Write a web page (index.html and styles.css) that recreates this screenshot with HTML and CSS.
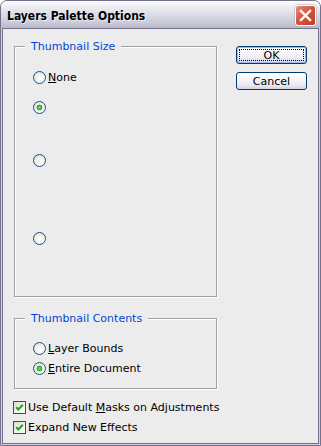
FILE: index.html
```html
<!DOCTYPE html>
<html>
<head>
<meta charset="utf-8">
<link rel="stylesheet" href="styles.css">
</head>
<body>
<div class="window">
  <div class="titlebar">
    <span class="title">Layers Palette Options</span>
    <span class="close">
      <svg width="21" height="21" viewBox="0 0 21 21"><path d="M6 6 L15 15 M15 6 L6 15" stroke="#fff" stroke-width="2.4" stroke-linecap="square" fill="none"/></svg>
    </span>
  </div>
  <div class="client">
    <div class="left">
      <div class="group g1">
        <div class="legend">Thumbnail Size</div>
        <div class="opt o1"><span class="radio"></span><span class="lbl"><u>N</u>one</span></div>
        <div class="opt o2"><span class="radio on"></span></div>
        <div class="opt o3"><span class="radio"></span></div>
        <div class="opt o4"><span class="radio"></span></div>
      </div>
      <div class="group g2">
        <div class="legend">Thumbnail Contents</div>
        <div class="opt p1"><span class="radio"></span><span class="lbl"><u>L</u>ayer Bounds</span></div>
        <div class="opt p2"><span class="radio on"></span><span class="lbl"><u>E</u>ntire Document</span></div>
      </div>
      <div class="checks">
        <div class="chk c1"><span class="box"><svg width="11" height="11" viewBox="0 0 11 11"><path d="M2.2 5.2 L4.3 7.5 L8.8 2.8" stroke="#21a121" stroke-width="2" fill="none"/></svg></span><span class="lbl">Use Default <u>M</u>asks on Adjustments</span></div>
        <div class="chk c2"><span class="box"><svg width="11" height="11" viewBox="0 0 11 11"><path d="M2.2 5.2 L4.3 7.5 L8.8 2.8" stroke="#21a121" stroke-width="2" fill="none"/></svg></span><span class="lbl">Expand New Effects</span></div>
      </div>
    </div>
    <div class="buttons">
      <div class="btn default"><span class="focus">OK</span></div>
      <div class="btn">Cancel</div>
    </div>
  </div>
</div>
</body>
</html>
```
FILE: styles.css
```css
html, body {
  margin: 0;
  background: #ffffff;
}
body {
  font-family: "DejaVu Sans", "Liberation Sans", sans-serif;
  font-size: 11px;
  line-height: 13px;
  color: #000;
}
.window {
  width: 321px;
  height: 446px;
  box-sizing: border-box;
  border: 1px solid #72728e;
  border-radius: 7px 7px 0 0;
  background: #d2d2de;
  display: flex;
  flex-direction: column;
  overflow: hidden;
}
.titlebar {
  height: 27px;
  flex: none;
  display: flex;
  justify-content: space-between;
  align-items: flex-start;
  padding: 0 4px 0 6px;
  background: linear-gradient(#fdfdfe 0%, #eeeef3 20%, #dcdce6 50%, #cacad8 80%, #b8b8cc 100%);
}
.title {
  font-family: "DejaVu Sans Condensed", "DejaVu Sans", sans-serif;
  font-stretch: condensed;
  font-weight: bold;
  font-size: 12px;
  line-height: 14px;
  margin-top: 8px;
  color: #000;
  text-shadow: 1px 1px 0 rgba(255,255,255,0.6);
}
.close {
  width: 21px;
  height: 21px;
  margin-top: 4px;
  box-sizing: border-box;
  border: 1px solid #fff;
  border-radius: 3px;
  background: linear-gradient(135deg, #e8907c 0%, #d4563e 45%, #c03a26 100%);
  display: flex;
  box-shadow: 0 0 0 0.5px #a8a8bc;
}
.close svg { margin: -1px; }
.client {
  flex: 1;
  margin: 0 1px 1px;
  border: 1px solid #72728e;
  background: #ececec;
  display: flex;
  align-items: flex-start;
  padding: 17px 0 0 11px;
}
.left { width: 203px; }
.group {
  box-sizing: border-box;
  border: 1px solid #a0a0a0;
  box-shadow: inset 1px 1px 0 #fff, 1px 1px 0 #fff;
}
.g1 { height: 251px; }
.g2 { height: 71px; margin-top: 21px; }
.legend {
  display: table;
  margin: -7px 0 0 10px;
  padding: 0 6px;
  background: #ececec;
  color: #0046d5;
}
.opt {
  display: flex;
  align-items: center;
  height: 13px;
  padding-left: 18px;
}
.o1 { margin-top: 18px; }
.o2 { margin-top: 17px; }
.o3 { margin-top: 40px; }
.o4 { margin-top: 65px; }
.p1 { margin-top: 17px; }
.p2 { margin-top: 7px; }
.radio {
  flex: none;
  width: 13px;
  height: 13px;
  box-sizing: border-box;
  border: 1px solid #1c5180;
  border-radius: 50%;
  margin-right: 2px;
  background: radial-gradient(circle at 62% 62%, #ffffff 0%, #f6f6f2 35%, #d8d6cc 100%);
}
.radio.on {
  background:
    radial-gradient(circle at 50% 50%, #7ee27e 0, #3fc43f 1.5px, #21a121 2.6px, rgba(33,161,33,0) 3.2px),
    radial-gradient(circle at 62% 62%, #ffffff 0%, #f6f6f2 35%, #d8d6cc 100%);
}
.lbl { white-space: nowrap; }
.checks { margin-left: -1px; margin-top: 12px; }
.chk {
  display: flex;
  align-items: center;
  height: 13px;
}
.c2 { margin-top: 7px; }
.box {
  flex: none;
  width: 13px;
  height: 13px;
  box-sizing: border-box;
  border: 1px solid #1c5180;
  background: linear-gradient(135deg, #dcdcd4 0%, #f4f4f0 60%, #ffffff 100%);
  margin-right: 2px;
  display: flex;
}
.buttons {
  margin-left: 19px;
  display: flex;
  flex-direction: column;
  gap: 8px;
}
.btn {
  width: 71px;
  height: 18px;
  box-sizing: border-box;
  border: 1px solid #003c74;
  border-radius: 3px;
  background: linear-gradient(#ffffff 0%, #f6f6f9 40%, #e6e6ef 80%, #d4d4e2 100%);
  display: flex;
  align-items: center;
  justify-content: center;
}
.btn.default {
  box-shadow: inset 0 0 0 1px #9fb6e2;
  padding: 2px;
}
.focus {
  flex: 1;
  align-self: stretch;
  border: 1px dotted #000;
  display: flex;
  align-items: center;
  justify-content: center;
  line-height: 11px;
}
```
